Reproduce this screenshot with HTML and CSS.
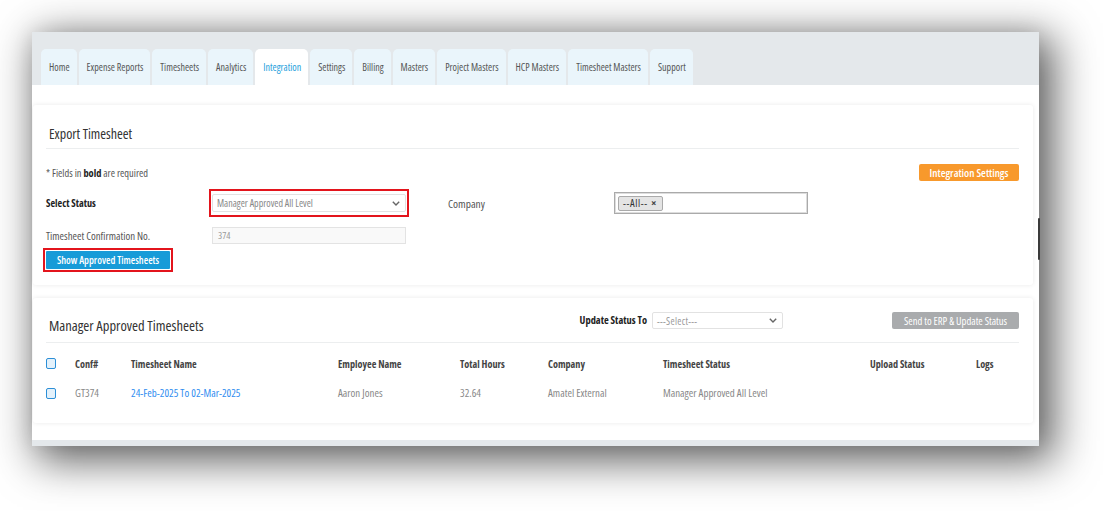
FILE: index.html
```html
<!DOCTYPE html>
<html lang="en">
<head>
<meta charset="utf-8">
<title>Export Timesheet</title>
<link rel="stylesheet" href="styles.css">
</head>
<body>
<div class="frame">
  <nav class="tabbar">
    <a class="tab">Home</a>
    <a class="tab">Expense Reports</a>
    <a class="tab">Timesheets</a>
    <a class="tab">Analytics</a>
    <a class="tab active">Integration</a>
    <a class="tab">Settings</a>
    <a class="tab">Billing</a>
    <a class="tab">Masters</a>
    <a class="tab">Project Masters</a>
    <a class="tab">HCP Masters</a>
    <a class="tab">Timesheet Masters</a>
    <a class="tab">Support</a>
  </nav>
  <main class="content">
    <section class="card card-export">
      <h2 class="card-title">Export Timesheet</h2>
      <div class="row row-note">
        <span class="note">* Fields in <b>bold</b> are required</span>
        <button class="btn btn-orange">Integration Settings</button>
      </div>
      <div class="row row-status">
        <label class="lbl lbl-bold lbl-status">Select Status</label>
        <span class="hl-box">
          <span class="select select-status">
            <span class="select-text">Manager Approved All Level</span>
            <svg class="chev" width="8" height="5" viewBox="0 0 8 5"><path d="M0.8 0.8l3.2 3.2 3.2-3.2" fill="none" stroke="#666" stroke-width="1.4"/></svg>
          </span>
        </span>
        <label class="lbl lbl-company">Company</label>
        <span class="multi">
          <span class="tag">--All-- <span class="tag-x">×</span></span>
        </span>
      </div>
      <div class="row row-conf">
        <label class="lbl lbl-conf">Timesheet Confirmation No.</label>
        <span class="input">374</span>
      </div>
      <div class="row row-btn">
        <span class="hl-box hl-btn">
          <button class="btn btn-blue">Show Approved Timesheets</button>
        </span>
      </div>
    </section>

    <section class="card card-list">
      <div class="list-head">
        <h2 class="card-title list-title">Manager Approved Timesheets</h2>
        <label class="lbl lbl-bold lbl-update">Update Status To</label>
        <span class="select select-update">
          <span class="select-text select-dash">---Select---</span>
          <svg class="chev" width="8" height="5" viewBox="0 0 8 5"><path d="M0.8 0.8l3.2 3.2 3.2-3.2" fill="none" stroke="#666" stroke-width="1.4"/></svg>
        </span>
        <button class="btn btn-gray">Send to ERP &amp; Update Status</button>
      </div>
      <div class="trow thead">
        <span class="c c0"><span class="cb"></span></span>
        <span class="c c1">Conf#</span>
        <span class="c c2">Timesheet Name</span>
        <span class="c c3">Employee Name</span>
        <span class="c c4">Total Hours</span>
        <span class="c c5">Company</span>
        <span class="c c6">Timesheet Status</span>
        <span class="c c7">Upload Status</span>
        <span class="c c8">Logs</span>
      </div>
      <div class="trow tbody">
        <span class="c c0"><span class="cb"></span></span>
        <span class="c c1">GT374</span>
        <span class="c c2"><a class="link">24-Feb-2025 To 02-Mar-2025</a></span>
        <span class="c c3">Aaron Jones</span>
        <span class="c c4">32.64</span>
        <span class="c c5">Amatel External</span>
        <span class="c c6">Manager Approved All Level</span>
        <span class="c c7"></span>
        <span class="c c8"></span>
      </div>
    </section>
    <div class="bottom-strip"></div>
  </main>
  <span class="scroll-mark"></span>
</div>
</body>
</html>
```
FILE: styles.css
```css
* { box-sizing: border-box; }
html, body { margin: 0; padding: 0; background: #fff; }
body {
  font-family: "Open Sans", sans-serif;
  font-stretch: 75%;
  color: #555;
  width: 1104px;
  height: 511px;
  overflow: hidden;
}
.frame {
  position: relative;
  margin: 32px 0 0 32px;
  width: 1007px;
  height: 414px;
  background: #fff;
  box-shadow: 10px 10px 40px 5px rgba(0,0,0,0.62), 0 0 20px rgba(0,0,0,0.08);
  display: flex;
  flex-direction: column;
}
/* Tabs */
.tabbar {
  height: 53px;
  background: #e4e8eb;
  padding: 17px 0 0 9px;
  display: flex;
  align-items: flex-end;
}
.tab {
  height: 36px;
  display: flex;
  align-items: center;
  padding: 0 7px 0 8px;
  margin-right: 2px;
  background: #eaf5fb;
  border-radius: 5px 5px 0 0;
  font-size: 10px;
  color: #555;
  white-space: nowrap;
}
.tab.active { background: #fff; color: #24a0dc; }

/* Content */
.content {
  flex: 1;
  padding: 20px 6px 0 1px;
  display: flex;
  flex-direction: column;
}
.card {
  background: #fff;
  border-radius: 3px;
  box-shadow: 0 0 5px rgba(0,0,0,0.09);
  padding: 0 14px 0 13px;
}
.card-export { height: 180px; }
.card-list { height: 125px; margin-top: 13px; }
.bottom-strip { margin-top: auto; height: 6px; background: #e4e8eb; margin-left: -1px; margin-right: -6px; }

.card-title {
  margin: 0;
  font-weight: 400;
  font-size: 14px;
  line-height: 17px;
  color: #333;
  padding: 20px 0 6px 3px;
  border-bottom: 1px solid #eceeef;
}
.row { display: flex; align-items: center; }
.row-note { margin-top: 15px; height: 17px; justify-content: space-between; }
.note { font-size: 10.4px; color: #555; }
.note b { color: #222; font-weight: 700; }
.lbl { font-size: 10.8px; color: #555; }
.lbl-bold { font-weight: 700; color: #222; }
.lbl-status { width: 163px; font-size: 10.2px; }
.row-status { margin-top: 8px; }
.hl-box {
  display: inline-flex;
  border: 2px solid #e3141c;
  padding: 3px 1px;
}
.select {
  display: flex;
  align-items: center;
  justify-content: space-between;
  background: #fff;
  border: 1px solid #e2e2e2;
  border-radius: 2px;
  height: 18px;
  padding: 0 5px 0 4px;
}
.select-status { width: 194px; }
.select-text { font-size: 10px; color: #888; }
.select-dash { color: #999; letter-spacing: 0.3px; }
.chev { display: block; }
.lbl-company { margin-left: 39px; width: 166px; font-size: 11.4px; }
.multi {
  width: 194px;
  height: 22px;
  border: 1px solid #aaa;
  box-shadow: inset 0 0 0 1px #ddd;
  display: flex;
  align-items: center;
  padding: 0 3px;
}
.tag {
  font-size: 10.5px;
  letter-spacing: 0.6px;
  color: #333;
  background: #e4e4e4;
  border: 1px solid #aaa;
  border-radius: 2px;
  height: 15px;
  line-height: 13px;
  padding: 0 5px 0 4px;
}
.tag-x { font-weight: 700; color: #444; margin-left: 1px; }
.row-conf { margin-top: 10px; }
.lbl-conf { width: 166px; }
.input {
  width: 194px;
  height: 17px;
  background: #f9f9f9;
  border: 1px solid #e3e3e3;
  font-size: 9.8px;
  color: #999;
  line-height: 15px;
  padding-left: 5px;
}
.row-btn { margin-top: 4px; margin-left: -3px; }
.hl-btn { padding: 1px; }
.btn {
  border: none;
  font-family: "Open Sans", sans-serif;
  font-stretch: 75%;
  font-weight: 600;
  color: #fff;
  border-radius: 2px;
  padding: 0;
  cursor: pointer;
}
.btn-orange { background: #f8992c; width: 100px; height: 17px; font-size: 11px; }
.btn-blue { background: #179bd8; width: 124px; height: 18px; font-size: 10.2px; border-radius: 1px; }
.btn-gray { background: #a9abad; width: 127px; height: 17px; font-size: 10.6px; margin-left: 109px; font-weight: 500; }

/* List card */
.list-head {
  display: flex;
  align-items: flex-start;
  height: 45px;
  padding-top: 14px;
  border-bottom: 1px solid #eceeef;
}
.list-title { flex: 1; border: none; padding: 5px 0 0 3px; font-size: 14.5px; }
.lbl-update { margin-top: 1px; margin-right: 5px; font-size: 10.4px; }
.select-update { width: 131px; height: 17px; }
.trow { display: flex; align-items: center; height: 29px; font-size: 10.9px; }
.thead { margin-top: 6px; font-weight: 700; color: #444; font-size: 10.2px; }
.tbody { color: #888; }
.c { display: block; white-space: nowrap; }
.c0 { width: 29px; }
.c1 { width: 56px; }
.c2 { width: 207px; }
.c3 { width: 122px; }
.c4 { width: 88px; }
.c5 { width: 115px; }
.c6 { width: 207px; }
.c7 { width: 106px; }
.c8 { flex: 1; }
.cb {
  display: block;
  width: 10px;
  height: 11px;
  border: 1.5px solid #2c8fd7;
  border-radius: 2px;
  background: #e3f1fb;
}
.tbody .cb { margin-top: 2px; }
.link { color: #2f8df0; }

.scroll-mark {
  position: absolute;
  right: -1px;
  top: 186px;
  width: 2px;
  height: 42px;
  background: #3a3a3a;
  border-radius: 1px;
}
```
